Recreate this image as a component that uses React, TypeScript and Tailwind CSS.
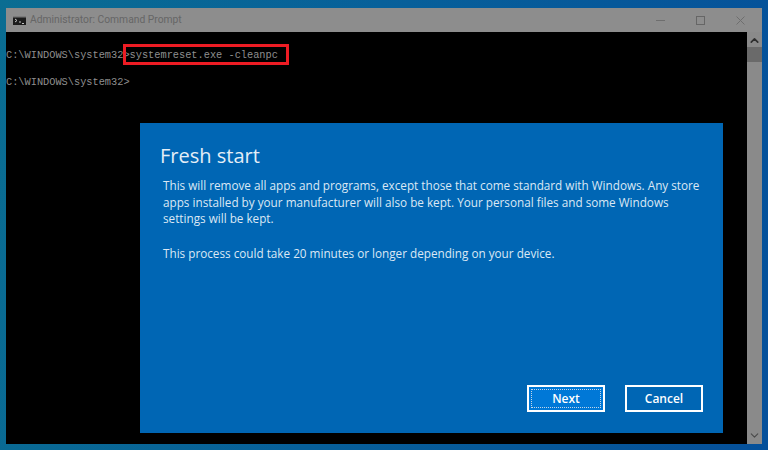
import { ChevronDown, ChevronUp } from 'lucide-react';

const uiFont = "font-['Open_Sans','Noto_Sans',sans-serif]";

function ConsoleIcon() {
  return (
    <svg width="13" height="9" viewBox="0 0 13 9" className="shrink-0">
      <rect x="0" y="0" width="13" height="9" fill="#1c1c1c" />
      <rect x="0" y="0" width="13" height="1.5" fill="#7a7a7a" />
      <path d="M2 3l2 1.5L2 6M6 6h2M9 7.5h2" stroke="#c4c4c4" strokeWidth="1" fill="none" />
    </svg>
  );
}

export default function App() {
  return (
    <div className="h-[450px] w-[768px] overflow-hidden bg-[linear-gradient(100deg,#0a6d92_0%,#07609a_45%,#05509a_100%)] pt-2 pl-1.5">
      <div className="relative flex h-[436px] w-[756px] flex-col bg-[#8a8a8a]">
        {/* Title bar */}
        <div className="flex h-6 shrink-0 items-center bg-[#8d8d8d] pl-[7px]">
          <ConsoleIcon />
          <span className="ml-1 font-['Roboto',sans-serif] text-[10.3px] text-[#666666]">Administrator: Command Prompt</span>
          <div className="ml-auto flex items-center">
            <svg width="9" height="9" viewBox="0 0 9 9" className="mr-[31px]">
              <path d="M0 4.5h9" stroke="#6e6e6e" strokeWidth="1" />
            </svg>
            <svg width="9" height="9" viewBox="0 0 9 9" className="mr-[31px]">
              <rect x="0.5" y="0.5" width="8" height="8" fill="none" stroke="#666666" strokeWidth="1" />
            </svg>
            <svg width="9" height="9" viewBox="0 0 9 9" className="mr-[17px]">
              <path d="M0.5 0.5l8 8M8.5 0.5l-8 8" stroke="#6e6e6e" strokeWidth="1" />
            </svg>
          </div>
        </div>

        <div className="flex min-h-0 flex-1">
          {/* Console */}
          <div className="flex-1 bg-black pt-4 font-['Liberation_Mono',monospace] text-[10.3px] leading-[14px] text-[#8f8f8f]">
            <div>C:\WINDOWS\system32&gt;systemreset.exe -cleanpc</div>
            <div className="mt-[13px]">C:\WINDOWS\system32&gt;</div>
          </div>

          {/* Scrollbar */}
          <div className="flex w-[15px] shrink-0 flex-col items-center bg-[#8a8a8a]">
            <ChevronUp size={13} strokeWidth={3} className="mt-0.5 text-[#2e2e2e]" />
            <div className="h-[15px] w-full bg-[#6a6a6a]" />
            <ChevronDown size={13} strokeWidth={2} className="mt-auto mb-0.5 text-[#4a4a4a]" />
          </div>
        </div>

        {/* Red annotation box */}
        <div className="absolute top-9 left-[117px] h-[21px] w-[166px] border-[3px] border-[#ed1c24]" />

        {/* Dialog */}
        <div className={`absolute top-[115px] left-[134px] flex h-[310px] w-[583px] flex-col bg-[#0066b4] text-white ${uiFont}`}>
          <h1 className="mt-[18px] ml-5 text-[20px] leading-[30px] font-normal text-[#e4eef7]">Fresh start</h1>
          <div className="mt-1.5 ml-[23px] w-[545px] text-[11.73px] leading-[16.5px] text-[#dbe8f4]">
            <p>
              This will remove all apps and programs, except those that come standard with Windows. Any store apps
              installed by your manufacturer will also be kept. Your personal files and some Windows settings will be
              kept.
            </p>
            <p className="mt-[18px]">This process could take 20 minutes or longer depending on your device.</p>
          </div>
          <div className="mt-auto mr-5 mb-[21px] flex justify-end gap-5 text-[12px] font-semibold">
            <button className="flex h-[27px] w-[78px] items-center justify-center border-2 border-white bg-[#0078d7] p-0.5">
              <span className="flex h-full w-full items-center justify-center border border-dotted border-[#c5d5e5]">Next</span>
            </button>
            <button className="h-[27px] w-[78px] border-2 border-white bg-[#0066b4]">Cancel</button>
          </div>
        </div>
      </div>
    </div>
  );
}
